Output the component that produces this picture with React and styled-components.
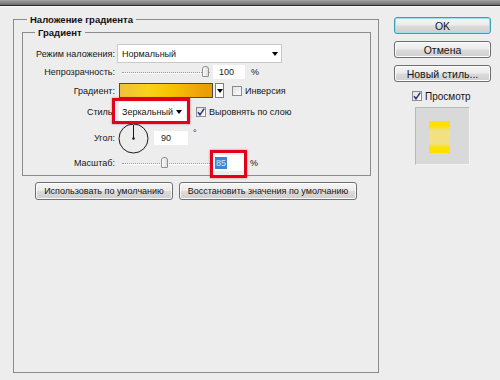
import React from 'react';
import styled, { createGlobalStyle } from 'styled-components';

const GlobalStyle = createGlobalStyle`
  html, body {
    margin: 0;
    padding: 0;
    background: #ededed;
  }
  body {
    font-family: "Liberation Sans", Arial, sans-serif;
    font-size: 9px;
    color: #161616;
  }
`;

const Window = styled.div`
  width: 500px;
  height: 380px;
  overflow: hidden;
  background: #ededed;
`;

const TitleStrip = styled.div`
  height: 5px;
  background: linear-gradient(#a4a4a4, #6c6c6c);
  border-bottom: 1px solid #2c2c2c;
  box-shadow: 0 1px 0 #fafafa;
`;

const Body = styled.div`
  display: flex;
  gap: 15px;
  padding-left: 13px;
`;

const Group = styled.fieldset`
  margin: 0;
  min-width: 0;
  box-sizing: border-box;
  border: 1px solid #8c8c8c;
`;

const OuterGroup = styled(Group)`
  margin-top: 7px;
  width: 366px;
  height: 360px;
  padding: 0 7px 0 8px;
`;

const InnerGroup = styled(Group)`
  padding: 5px 0 3px 0;
`;

const Legend = styled.legend`
  margin-left: ${({ $offset }) => $offset}px;
  padding: 0 3px;
  font-weight: bold;
  font-size: 9.5px;
  line-height: 13px;
  color: #111;
`;

const Row = styled.div`
  display: flex;
  align-items: center;
  height: ${({ $h }) => $h}px;
`;

const Label = styled.span`
  flex: none;
  width: 92px;
  margin-right: 2px;
  text-align: right;
  white-space: nowrap;
`;

const Arrow = styled.span`
  flex: none;
  width: 0;
  height: 0;
  border-left: 3px solid transparent;
  border-right: 3px solid transparent;
  border-top: 4px solid #000;
`;

const Select = styled.div`
  box-sizing: border-box;
  display: flex;
  align-items: center;
  justify-content: space-between;
  width: ${({ $w }) => $w}px;
  height: ${({ $hgt }) => $hgt}px;
  margin-left: ${({ $ml }) => $ml || 0}px;
  padding: 0 3px 0 ${({ $pl }) => $pl || 4}px;
  background: #fff;
  white-space: nowrap;
  border: 1px solid ${({ $plain }) => ($plain ? '#fff' : '#c9c9c9')};
`;

const Marked = styled.span`
  position: relative;
  display: inline-flex;

  &::after {
    content: '';
    position: absolute;
    top: ${({ $t }) => $t}px;
    bottom: ${({ $b }) => $b}px;
    left: ${({ $l }) => $l}px;
    right: ${({ $r }) => $r}px;
    border: 3px solid #e2001a;
    box-shadow: 0 0 2px rgba(160, 0, 0, 0.5);
    pointer-events: none;
  }
`;

const SliderTrack = styled.div`
  position: relative;
  flex: none;
  width: ${({ $w }) => $w}px;
  height: 12px;

  &::before {
    content: '';
    position: absolute;
    left: 5px;
    right: 3px;
    top: 6px;
    border-top: 1px dotted #9a9a9a;
    border-bottom: 1px solid #fdfdfd;
  }
`;

const Thumb = styled.span`
  position: absolute;
  top: 0;
  width: 7px;
  height: 11px;
  box-sizing: border-box;
  border: 1px solid #8f8f8f;
  border-radius: 3px 3px 1px 1px;
  background: linear-gradient(to right, #fdfdfd, #dcdcdc);
`;

const NumberBox = styled.div`
  box-sizing: border-box;
  display: flex;
  align-items: center;
  width: ${({ $w }) => $w}px;
  height: ${({ $hgt }) => $hgt}px;
  margin-left: ${({ $ml }) => $ml || 0}px;
  padding-left: ${({ $pl }) => $pl || 5}px;
  background: #fff;
  color: #1a1a1a;
`;

const Selected = styled.span`
  background: #3b86d6;
  color: #d6e8fa;
  padding: 1px 1px;
`;

const Unit = styled.span`
  margin-left: ${({ $ml }) => $ml}px;
  align-self: ${({ $up }) => ($up ? 'flex-start' : 'auto')};
  margin-top: ${({ $up }) => ($up ? '6px' : '0')};
`;

const Swatch = styled.div`
  box-sizing: border-box;
  width: 94px;
  height: 15px;
  margin-left: 2px;
  border: 1px solid #4a4a4a;
  background: linear-gradient(to right, #eec03e, #f9d21a 30%, #f6c400 55%, #eea40a 85%, #e89a02);
`;

const ArrowButton = styled.div`
  box-sizing: border-box;
  display: flex;
  align-items: center;
  justify-content: center;
  width: 9px;
  height: 15px;
  margin-left: 2px;
  background: #fff;
  border: 1px solid #7e7e7e;
`;

const CheckWrap = styled.label`
  display: inline-flex;
  align-items: center;
  gap: 3px;
  margin-left: ${({ $ml }) => $ml || 0}px;
  white-space: nowrap;
`;

const Box = styled.span`
  box-sizing: border-box;
  display: inline-flex;
  align-items: center;
  justify-content: center;
  width: 10px;
  height: 10px;
  background: linear-gradient(135deg, #e2e2e2, #fbfbfb);
  border: 1px solid #8b8b8b;
`;

const Check = ({ checked, children, ml }) => (
  <CheckWrap $ml={ml}>
    <Box>
      {checked && (
        <svg width="8" height="8" viewBox="0 0 8 8">
          <path d="M1 4.2 L3 6.8 L7.2 0.6" fill="none" stroke="#2b2f7a" strokeWidth="1.5" />
        </svg>
      )}
    </Box>
    {children}
  </CheckWrap>
);

const Dial = styled.svg`
  flex: none;
  margin-left: 1px;
`;

const ButtonRow = styled.div`
  display: flex;
  gap: 6px;
  margin-top: 6px;
  padding-left: 13px;
`;

const Button = styled.button`
  box-sizing: border-box;
  width: ${({ $w }) => $w}px;
  height: ${({ $hgt }) => $hgt || 18}px;
  padding: 0;
  font: inherit;
  font-size: ${({ $fs }) => $fs || 9}px;
  color: #141414;
  border: 1px solid ${({ $focus }) => ($focus ? '#3a9fb3' : '#707070')};
  border-radius: 3px;
  background: linear-gradient(#f6f6f6, #ebebeb 48%, #dbdbdb 52%, #cfcfcf);
  box-shadow: ${({ $focus }) =>
    $focus ? 'inset 0 0 0 1px #9edfee' : 'inset 0 0 0 1px #fbfbfb'};
`;

const Side = styled.div`
  display: flex;
  flex-direction: column;
  gap: 7px;
  width: 97px;
  margin-top: 11px;
`;

const PreviewToggle = styled.div`
  margin-top: 2px;
  padding-left: 18px;
  height: 10px;
  display: flex;
  align-items: center;
  font-size: 10px;
`;

const Preview = styled.div`
  box-sizing: border-box;
  width: 55px;
  height: 58px;
  margin-left: 21px;
  margin-top: -1px;
  padding: 13px 0 0 13px;
  background: #d9d9d9;
  border-top: 1px solid #b8b8b8;
  border-left: 1px solid #b8b8b8;
  border-right: 1px solid #f4f4f4;
  border-bottom: 1px solid #f4f4f4;
`;

const PreviewFill = styled.div`
  width: 21px;
  height: 32px;
  background: linear-gradient(
    #ffe100,
    #ffe100 16%,
    #efe08e 30%,
    #f3e27a 50%,
    #efe08e 70%,
    #ffe100 84%,
    #ffe100
  );
`;

export default function App() {
  return (
    <Window>
      <GlobalStyle />
      <TitleStrip />
      <Body>
        <OuterGroup>
          <Legend $offset={5}>Наложение градиента</Legend>
          <InnerGroup>
            <Legend $offset={12}>Градиент</Legend>

            <Row $h={19}>
              <Label>Режим наложения:</Label>
              <Select $w={165} $hgt={19}>
                Нормальный
                <Arrow />
              </Select>
            </Row>

            <Row $h={17}>
              <Label>Непрозрачность:</Label>
              <SliderTrack $w={96}>
                <Thumb style={{ left: 85 }} />
              </SliderTrack>
              <NumberBox $w={32} $hgt={14} $pl={6}>
                100
              </NumberBox>
              <Unit $ml={6}>%</Unit>
            </Row>

            <Row $h={21}>
              <Label>Градиент:</Label>
              <Swatch />
              <ArrowButton>
                <Arrow />
              </ArrowButton>
              <Check ml={8}>Инверсия</Check>
            </Row>

            <Row $h={21}>
              <Label>Стиль:</Label>
              <Marked $t={-4} $b={-3} $l={-5} $r={-4}>
                <Select $w={67} $hgt={19} $ml={2} $pl={2} $plain>
                  Зеркальный
                  <Arrow />
                </Select>
              </Marked>
              <Check checked ml={10}>
                Выровнять по слою
              </Check>
            </Row>

            <Row $h={32}>
              <Label>Угол:</Label>
              <Dial width="31" height="31" viewBox="0 0 31 31">
                <circle cx="15.5" cy="15.5" r="14.5" fill="none" stroke="#1a1a1a" strokeWidth="1" />
                <line x1="15.5" y1="15.5" x2="15.5" y2="2" stroke="#1a1a1a" strokeWidth="1" />
                <circle cx="15.5" cy="15.5" r="1.3" fill="#1a1a1a" />
              </Dial>
              <NumberBox $w={34} $hgt={14} $ml={5} $pl={7}>
                90
              </NumberBox>
              <Unit $ml={5} $up>
                °
              </Unit>
            </Row>

            <Row $h={18}>
              <Label>Масштаб:</Label>
              <SliderTrack $w={96}>
                <Thumb style={{ left: 44 }} />
              </SliderTrack>
              <Marked $t={-5} $b={-7} $l={-3} $r={-2}>
                <NumberBox $w={32} $hgt={16} $pl={2}>
                  <Selected>85</Selected>
                </NumberBox>
              </Marked>
              <Unit $ml={5}>%</Unit>
            </Row>
          </InnerGroup>

          <ButtonRow>
            <Button $w={138}>Использовать по умолчанию</Button>
            <Button $w={178}>Восстановить значения по умолчанию</Button>
          </ButtonRow>
        </OuterGroup>

        <Side>
          <Button $w={97} $hgt={17} $fs={10.5} $focus>
            OK
          </Button>
          <Button $w={97} $hgt={17} $fs={10.5}>
            Отмена
          </Button>
          <Button $w={97} $hgt={17} $fs={10.5}>
            Новый стиль...
          </Button>
          <PreviewToggle>
            <Check checked>Просмотр</Check>
          </PreviewToggle>
          <Preview>
            <PreviewFill />
          </Preview>
        </Side>
      </Body>
    </Window>
  );
}
